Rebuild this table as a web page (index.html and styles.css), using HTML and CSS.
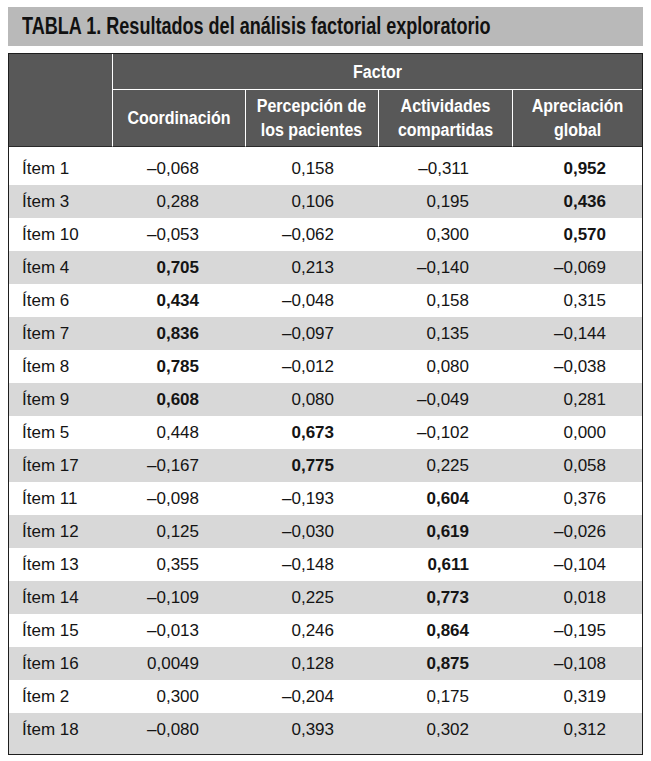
FILE: index.html
```html
<!DOCTYPE html>
<html lang="es">
<head>
<meta charset="utf-8">
<title>Tabla 1</title>
<link rel="stylesheet" href="styles.css">
</head>
<body>
<div class="page">
  <div class="title-bar"><h1 class="title">TABLA 1. Resultados del análisis factorial exploratorio</h1></div>
  <table class="data-table">
    <colgroup>
      <col class="c-item">
      <col class="c-1">
      <col class="c-2">
      <col class="c-3">
      <col class="c-4">
    </colgroup>
    <thead>
      <tr class="head-top">
        <th class="corner" rowspan="2"></th>
        <th class="factor" colspan="4"><span class="hd">Factor</span></th>
      </tr>
      <tr class="head-sub">
        <th><span class="hd">Coordinación</span></th>
        <th><span class="hd">Percepción de<br>los pacientes</span></th>
        <th><span class="hd">Actividades<br>compartidas</span></th>
        <th><span class="hd">Apreciación<br>global</span></th>
      </tr>
    </thead>
    <tbody>
      <tr><td>Ítem 1</td><td>–0,068</td><td>0,158</td><td>–0,311</td><td class="b">0,952</td></tr>
      <tr><td>Ítem 3</td><td>0,288</td><td>0,106</td><td>0,195</td><td class="b">0,436</td></tr>
      <tr><td>Ítem 10</td><td>–0,053</td><td>–0,062</td><td>0,300</td><td class="b">0,570</td></tr>
      <tr><td>Ítem 4</td><td class="b">0,705</td><td>0,213</td><td>–0,140</td><td>–0,069</td></tr>
      <tr><td>Ítem 6</td><td class="b">0,434</td><td>–0,048</td><td>0,158</td><td>0,315</td></tr>
      <tr><td>Ítem 7</td><td class="b">0,836</td><td>–0,097</td><td>0,135</td><td>–0,144</td></tr>
      <tr><td>Ítem 8</td><td class="b">0,785</td><td>–0,012</td><td>0,080</td><td>–0,038</td></tr>
      <tr><td>Ítem 9</td><td class="b">0,608</td><td>0,080</td><td>–0,049</td><td>0,281</td></tr>
      <tr><td>Ítem 5</td><td>0,448</td><td class="b">0,673</td><td>–0,102</td><td>0,000</td></tr>
      <tr><td>Ítem 17</td><td>–0,167</td><td class="b">0,775</td><td>0,225</td><td>0,058</td></tr>
      <tr><td>Ítem 11</td><td>–0,098</td><td>–0,193</td><td class="b">0,604</td><td>0,376</td></tr>
      <tr><td>Ítem 12</td><td>0,125</td><td>–0,030</td><td class="b">0,619</td><td>–0,026</td></tr>
      <tr><td>Ítem 13</td><td>0,355</td><td>–0,148</td><td class="b">0,611</td><td>–0,104</td></tr>
      <tr><td>Ítem 14</td><td>–0,109</td><td>0,225</td><td class="b">0,773</td><td>0,018</td></tr>
      <tr><td>Ítem 15</td><td>–0,013</td><td>0,246</td><td class="b">0,864</td><td>–0,195</td></tr>
      <tr><td>Ítem 16</td><td>0,0049</td><td>0,128</td><td class="b">0,875</td><td>–0,108</td></tr>
      <tr><td>Ítem 2</td><td>0,300</td><td>–0,204</td><td>0,175</td><td>0,319</td></tr>
      <tr><td>Ítem 18</td><td>–0,080</td><td>0,393</td><td>0,302</td><td>0,312</td></tr>
    </tbody>
  </table>
</div>
</body>
</html>
```
FILE: styles.css
```css
html, body {
  margin: 0;
  padding: 0;
  background: #ffffff;
}

.page {
  padding: 7px 8px 0 8px;
  font-family: "Liberation Sans", Arial, sans-serif;
  color: #141414;
}

.title-bar {
  height: 39px;
  background: #b9b9b9;
  display: flex;
  align-items: center;
  padding-left: 14px;
}

.title {
  margin: 0;
  font-family: "Liberation Sans", Arial, sans-serif;
  font-size: 23px;
  font-weight: bold;
  color: #111111;
  white-space: nowrap;
  transform: scaleX(0.785);
  transform-origin: left center;
}

.data-table {
  margin-top: 7px;
  width: 635px;
  table-layout: fixed;
  border-collapse: separate;
  border-spacing: 0;
  border: 1px solid #1e1e1e;
}

.c-item { width: 103px; }
.c-1 { width: 133px; }
.c-2 { width: 133px; }
.c-3 { width: 134px; }
.c-4 { width: 130px; }

thead th {
  background: #585858;
  color: #ffffff;
  font-weight: bold;
  font-size: 18px;
  line-height: 24px;
  text-align: center;
  padding: 0;
}

.hd {
  display: inline-block;
  transform: scaleX(0.89);
  transform-origin: center center;
}

.head-top th {
  height: 35px;
}

.head-top .factor {
  border-left: 1px solid #ffffff;
  border-bottom: 1px solid #ffffff;
}

.head-sub th {
  height: 56px;
  border-left: 1px solid #ffffff;
  border-bottom: 1px solid #2a2a2a;
}

.head-top .corner {
  border-bottom: 1px solid #2a2a2a;
}

tbody td {
  height: 33px;
  padding: 0;
  font-size: 17px;
  line-height: 20px;
  text-align: right;
  vertical-align: middle;
}

tbody tr:nth-child(even) td {
  background: #d8d8d8;
}

tbody td:first-child {
  text-align: left;
  padding-left: 13px;
}

tbody td:nth-child(2) { padding-right: 46px; }
tbody td:nth-child(3) { padding-right: 44px; }
tbody td:nth-child(4) { padding-right: 43px; }
tbody td:nth-child(5) { padding-right: 36px; }

tbody tr:first-child td {
  height: 38px;
  padding-top: 5px;
  box-sizing: border-box;
}

tbody tr:last-child td {
  height: 41px;
  padding-bottom: 8px;
  box-sizing: border-box;
}

.b {
  font-weight: bold;
}
```
